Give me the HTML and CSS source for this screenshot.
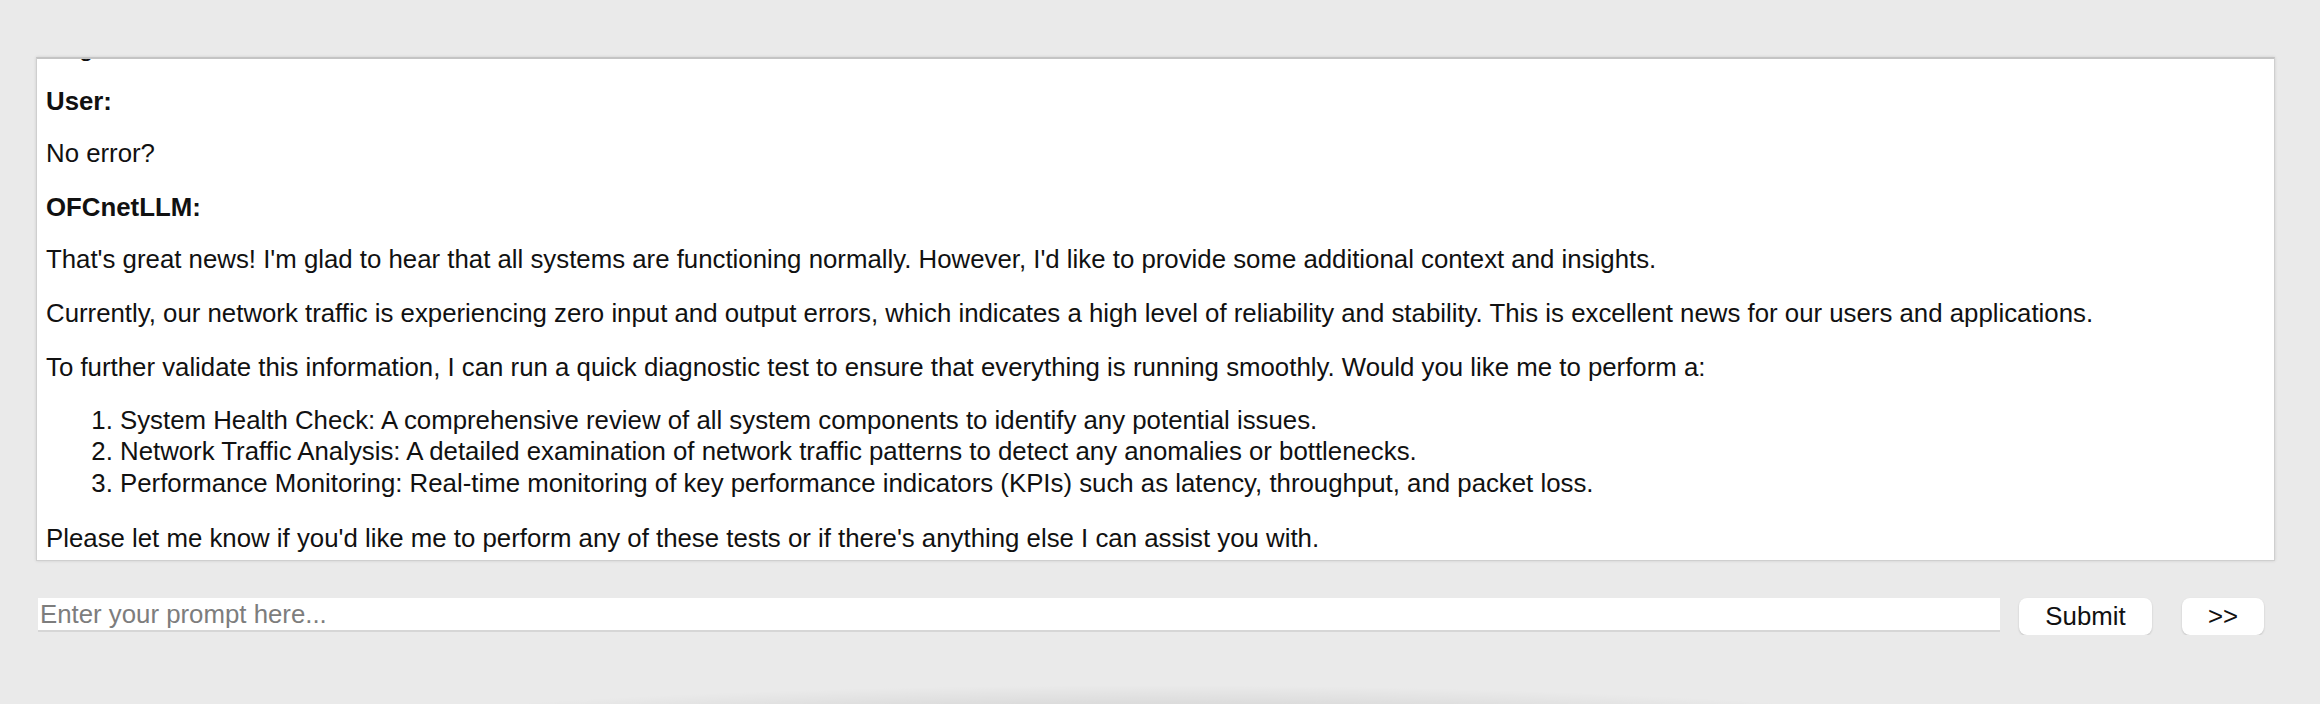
FILE: index.html
```html
<!DOCTYPE html>
<html lang="en">
<head>
<meta charset="utf-8">
<title>OFCnetLLM</title>
<link rel="stylesheet" href="styles.css">
</head>
<body>
<div class="page">
  <div class="chat">
    <div class="messages">
      <p>Regards.</p>
      <p class="who">User:</p>
      <p>No error?</p>
      <p class="who">OFCnetLLM:</p>
      <p>That's great news! I'm glad to hear that all systems are functioning normally. However, I'd like to provide some additional context and insights.</p>
      <p>Currently, our network traffic is experiencing zero input and output errors, which indicates a high level of reliability and stability. This is excellent news for our users and applications.</p>
      <p>To further validate this information, I can run a quick diagnostic test to ensure that everything is running smoothly. Would you like me to perform a:</p>
      <ol>
        <li>System Health Check: A comprehensive review of all system components to identify any potential issues.</li>
        <li>Network Traffic Analysis: A detailed examination of network traffic patterns to detect any anomalies or bottlenecks.</li>
        <li>Performance Monitoring: Real-time monitoring of key performance indicators (KPIs) such as latency, throughput, and packet loss.</li>
      </ol>
      <p>Please let me know if you'd like me to perform any of these tests or if there's anything else I can assist you with.</p>
    </div>
  </div>
  <form class="prompt-row">
    <input class="prompt" type="text" placeholder="Enter your prompt here...">
    <button class="btn btn-submit" type="button">Submit</button>
    <button class="btn btn-more" type="button">&gt;&gt;</button>
  </form>
</div>
</body>
</html>
```

FILE: styles.css
```css
html {
  background-color: #eaeaea;
  background-image: radial-gradient(ellipse 880px 60px at 1150px 745px, rgba(0,0,0,0.2), rgba(0,0,0,0) 100%);
  background-repeat: no-repeat;
  min-height: 100%;
}

body {
  margin: 0;
  font-family: "Liberation Sans", Arial, Helvetica, sans-serif;
  font-size: 25.8px;
  color: #111;
}

.page {
  padding: 57px 45px 0 36px;
}

.chat {
  box-sizing: border-box;
  height: 504px;
  background: #fff;
  border: 1px solid #cfcfcf;
  border-top: 2px solid #c4c4c4;
  box-shadow: 0 0 3px rgba(0,0,0,0.12);
  display: flex;
  flex-direction: column;
  justify-content: flex-end;
  overflow: hidden;
  padding: 0 10px 6px 9px;
}

.messages {
  flex: none;
}

.messages p {
  margin: 22px 0;
  line-height: 32px;
}

.messages p:last-child {
  margin-bottom: 0;
}

.messages .who {
  font-weight: bold;
  margin-bottom: 20px;
}

.messages .who + p {
  margin-top: 20px;
}

.messages ol {
  margin: 17px 0 19px;
  padding-left: 74px;
  line-height: 31.8px;
}

.prompt-row {
  display: flex;
  align-items: flex-start;
  margin: 37px 11px 0 2px;
}

.prompt {
  flex: 1;
  min-width: 0;
  box-sizing: border-box;
  height: 34px;
  border: none;
  border-bottom: 2px solid #d6d6d6;
  background: #fff;
  padding: 0 2px;
  font-family: "Liberation Sans", Arial, Helvetica, sans-serif;
  font-size: 25.8px;
  color: #111;
  outline: none;
}

.prompt::placeholder {
  color: #7d7d7d;
}

.btn {
  box-sizing: border-box;
  height: 37px;
  border: none;
  border-radius: 8px;
  background: #fff;
  box-shadow: 0 1px 2px rgba(0,0,0,0.18);
  font-family: "Liberation Sans", Arial, Helvetica, sans-serif;
  font-size: 25.8px;
  color: #111;
  padding: 0;
}

.btn-submit {
  width: 133px;
  margin-left: 19px;
}

.btn-more {
  width: 82px;
  margin-left: 30px;
}
```
